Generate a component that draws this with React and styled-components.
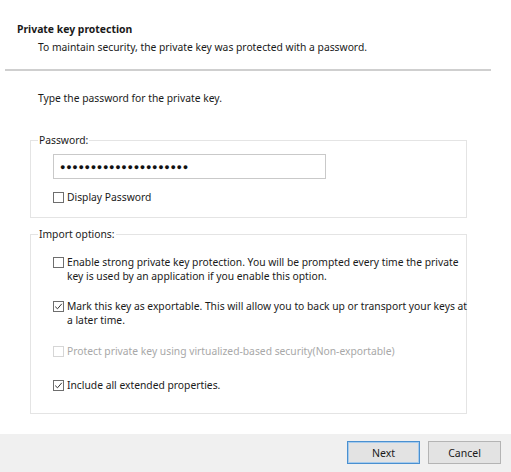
import React from "react";
import styled, { createGlobalStyle } from "styled-components";

const Global = createGlobalStyle`
  html, body { margin: 0; padding: 0; background: #ffffff; }
  body { font-family: "Noto Sans", "Open Sans", sans-serif; color: #1a1a1a; }
`;

const Window = styled.div`
  width: 511px;
  height: 472px;
  display: flex;
  flex-direction: column;
  background: #ffffff;
  overflow: hidden;
`;

const Header = styled.header`
  padding: 22px 0 0 17px;
  height: 47px;
  box-sizing: border-box;
`;

const Title = styled.div`
  font-size: 10.4px;
  font-weight: 700;
  line-height: 14px;
`;

const Subtitle = styled.div`
  font-size: 10.3px;
  line-height: 14px;
  margin: 4px 0 0 21px;
`;

const Divider = styled.hr`
  margin: 22px 0 0 5px;
  width: 486px;
  height: 2px;
  border: none;
  background: #cfcfcf;
`;

const Body = styled.main`
  flex: 1;
  padding: 20px 0 0 30px;
  display: flex;
  flex-direction: column;
`;

const Intro = styled.div`
  font-size: 10.3px;
  line-height: 14px;
  padding-left: 8px;
`;

const Group = styled.fieldset`
  width: 437px;
  box-sizing: border-box;
  margin: ${(p) => p.$top}px 0 0 0;
  padding: 0 0 0 22px;
  border: 1px solid #e4e4e4;
  min-width: 0;
  height: ${(p) => p.$height}px;
`;

const Legend = styled.legend`
  font-size: 10.3px;
  line-height: 14px;
  padding: 0 1px;
  margin-left: -15px;
`;

const PasswordBox = styled.div`
  width: 273px;
  height: 25px;
  box-sizing: border-box;
  border: 1px solid #c9c9c9;
  margin-top: 7px;
  display: flex;
  align-items: center;
  padding-left: 6px;
  font-family: "Liberation Sans", sans-serif;
  font-size: 9px;
  letter-spacing: 0.7px;
  color: #111;
`;

const Row = styled.label`
  display: flex;
  align-items: flex-start;
  margin-top: ${(p) => p.$top}px;
  width: 416px;
  color: ${(p) => (p.$disabled ? "#a8a8a8" : "#1a1a1a")};
`;

const Box = styled.span`
  flex: none;
  width: 11px;
  height: 11px;
  box-sizing: border-box;
  border: 1px solid ${(p) => (p.$disabled ? "#d6d6d6" : "#6e6e6e")};
  background: #fff;
  margin: 2px 3px 0 0;
  display: flex;
  align-items: center;
  justify-content: center;
`;

const Text = styled.span`
  font-size: 10.3px;
  line-height: 14px;
`;

const Footer = styled.footer`
  height: 38px;
  background: #f0f0f0;
  display: flex;
  justify-content: flex-end;
  align-items: center;
  gap: 8px;
  padding: 0 10px 1px 0;
  box-sizing: border-box;
`;

const Button = styled.button`
  width: 73px;
  height: 23px;
  box-sizing: border-box;
  font-family: "Noto Sans", "Open Sans", sans-serif;
  font-size: 10.5px;
  color: #1a1a1a;
  background: #e3e3e3;
  border: 1px solid ${(p) => (p.$primary ? "#4a90d0" : "#b4b4b4")};
  box-shadow: ${(p) => (p.$primary ? "inset 0 0 0 1px #a6cbed" : "none")};
  padding: 0;
`;

const Check = () => (
  <svg width="9" height="9" viewBox="0 0 9 9">
    <path d="M1.2 4.6 L3.5 6.8 L7.8 1.8" fill="none" stroke="#333" strokeWidth="1" />
  </svg>
);

const Option = ({ checked, disabled, top, children }) => (
  <Row $top={top} $disabled={disabled}>
    <Box $disabled={disabled}>{checked && <Check />}</Box>
    <Text>{children}</Text>
  </Row>
);

export default function App() {
  return (
    <>
      <Global />
      <Window>
        <Header>
          <Title>Private key protection</Title>
          <Subtitle>To maintain security, the private key was protected with a password.</Subtitle>
        </Header>
        <Divider />
        <Body>
          <Intro>Type the password for the private key.</Intro>
          <Group $top={28} $height={85}>
            <Legend>Password:</Legend>
            <PasswordBox>{"\u25CF".repeat(21)}</PasswordBox>
            <Option top={11}>Display Password</Option>
          </Group>
          <Group $top={9} $height={187}>
            <Legend>Import options:</Legend>
            <Option top={14}>
              Enable strong private key protection. You will be prompted every time the private key is used by an application if you enable this option.
            </Option>
            <Option top={16} checked>
              Mark this key as exportable. This will allow you to back up or transport your keys at a later time.
            </Option>
            <Option top={17} disabled>
              Protect private key using virtualized-based security(Non-exportable)
            </Option>
            <Option top={20} checked>
              Include all extended properties.
            </Option>
          </Group>
        </Body>
        <Footer>
          <Button $primary>Next</Button>
          <Button>Cancel</Button>
        </Footer>
      </Window>
    </>
  );
}
